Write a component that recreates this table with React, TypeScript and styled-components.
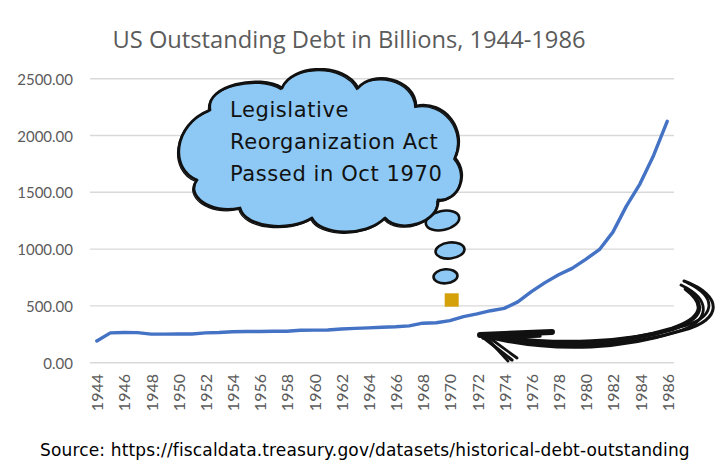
import React from "react";
import styled, { createGlobalStyle } from "styled-components";

const GlobalStyle = createGlobalStyle`
  html, body {
    margin: 0;
    padding: 0;
    background: #ffffff;
  }
`;

// outstanding debt, billions of dollars, 1944..1986
const debt = [
  191, 262, 266, 265, 252, 252, 253, 253, 262, 266, 273, 275, 275, 276, 277,
  285, 287, 288, 297, 302, 306, 312, 316, 324, 348, 352, 371, 405, 430, 458,
  478, 535, 625, 705, 775, 830, 910, 995, 1150, 1380, 1575, 1825, 2125,
];

const PLOT_LEFT = 90;
const PLOT_RIGHT = 674;
const ZERO_Y = 362.7;
const STEP_Y = 56.8; // px per 500
const slot = (PLOT_RIGHT - PLOT_LEFT) / debt.length;
const xOf = (i: number) => PLOT_LEFT + slot * (i + 0.5);
const yOf = (v: number) => ZERO_Y - (v / 500) * STEP_Y;

const ticks = [0, 500, 1000, 1500, 2000, 2500];

const Page = styled.div`
  position: relative;
  width: 722px;
  height: 472px;
  background: #ffffff;
  overflow: hidden;
  display: flex;
  flex-direction: column;
`;

const Title = styled.h1`
  margin: 0;
  padding: 26px 24px 8px 0;
  font-family: "Open Sans", Lato, sans-serif;
  font-weight: 400;
  font-size: 23.7px;
  line-height: 26px;
  color: #5b5b5b;
  text-align: center;
  white-space: nowrap;
`;

const Plot = styled.svg`
  display: block;
  flex: none;
  width: 722px;
  height: 360px;
`;

const AxisLabel = styled.text`
  font-family: Lato, "Open Sans", sans-serif;
  font-size: 15px;
  fill: #5b5b5b;
`;

const YearLabel = styled(AxisLabel)`
  font-size: 16px;
`;

const Source = styled.p`
  margin: 20px 0 0;
  padding-left: 40px;
  font-family: "Comic Sans MS", "DejaVu Sans", sans-serif;
  font-size: 17px;
  line-height: 20px;
  letter-spacing: 0.15px;
  color: #000000;
  white-space: nowrap;
`;

const Callout = styled.div`
  position: absolute;
  left: 176px;
  top: 68px;
  width: 290px;
  height: 166px;
`;

const CloudShape = styled.svg`
  position: absolute;
  inset: 0;
  width: 100%;
  height: 100%;
`;

const CalloutText = styled.div`
  position: relative;
  padding: 26px 0 0 54px;
  font-family: "Comic Sans MS", "DejaVu Sans", sans-serif;
  font-size: 21px;
  line-height: 32px;
  letter-spacing: 0.6px;
  color: #111111;
  white-space: nowrap;
`;

const cloudPath =
  "M 210 110 C 205 85, 260 74, 282 88 C 292 64, 345 62, 358 88 " +
  "C 372 70, 415 78, 416 106 C 445 100, 468 130, 455 158 " +
  "C 470 175, 458 202, 438 200 C 440 222, 400 235, 385 218 " +
  "C 365 238, 320 235, 312 218 C 290 232, 245 228, 240 208 " +
  "C 210 215, 185 195, 197 180 C 170 170, 172 125, 210 110 Z";

const arrowStrokes = [
  { d: "M 684 281 C 724 296, 722 320, 684 330 C 632 346, 560 352, 484 336", w: 3 },
  { d: "M 688 283 C 718 298, 716 318, 680 327 C 630 341, 560 347, 486 334", w: 2.8 },
  { d: "M 681 285 C 712 300, 711 322, 676 332 C 628 348, 560 354, 490 338", w: 2.8 },
  { d: "M 686 289 C 706 304, 704 318, 672 329 C 626 343, 560 350, 488 336", w: 4.5 },
  { d: "M 480 335 L 552 332", w: 6 },
  { d: "M 483 338 L 540 336", w: 3.5 },
  { d: "M 480 335 L 512 360", w: 3.2 },
  { d: "M 484 335 L 508 361", w: 2.8 },
  { d: "M 487 336 L 517 358", w: 2.8 },
];

const bubbles = [
  { cx: 442.5, cy: 220.5, rx: 17, ry: 9.5, rot: -12 },
  { cx: 450, cy: 250.5, rx: 14.5, ry: 8, rot: -6 },
  { cx: 445.5, cy: 276.3, rx: 12, ry: 7, rot: -4 },
];

const App: React.FC = () => {
  const linePoints = debt.map((v, i) => `${xOf(i).toFixed(1)},${yOf(v).toFixed(1)}`).join(" ");

  return (
    <Page>
      <GlobalStyle />
      <Title>US Outstanding Debt in Billions, 1944-1986</Title>

      <Plot viewBox="0 60 722 360">
        {ticks.map((t) => {
          const y = ZERO_Y - (t / 500) * STEP_Y;
          return (
            <g key={t}>
              <line x1={PLOT_LEFT} x2={PLOT_RIGHT} y1={y} y2={y} stroke="#d9d9d9" strokeWidth={1.4} />
              <AxisLabel x={73} y={y} textAnchor="end" dominantBaseline="central">
                {t.toFixed(2)}
              </AxisLabel>
            </g>
          );
        })}

        {debt.map((_, i) =>
          i % 2 === 0 ? (
            <YearLabel
              key={i}
              x={xOf(i)}
              y={374}
              textAnchor="end"
              dominantBaseline="central"
              transform={`rotate(-90 ${xOf(i)} 374)`}
            >
              {1944 + i}
            </YearLabel>
          ) : null
        )}

        <polyline
          points={linePoints}
          fill="none"
          stroke="#4472c4"
          strokeWidth={3.4}
          strokeLinejoin="round"
          strokeLinecap="round"
        />

        <rect x={444.7} y={293.3} width={14} height={13.4} fill="#d5a10a" />

        {bubbles.map((b, i) => (
          <ellipse
            key={i}
            cx={b.cx}
            cy={b.cy}
            rx={b.rx}
            ry={b.ry}
            transform={`rotate(${b.rot} ${b.cx} ${b.cy})`}
            fill="#8dc9f4"
            stroke="#111111"
            strokeWidth={2.6}
          />
        ))}

        <g fill="none" stroke="#111111" strokeLinecap="round" strokeLinejoin="round">
          {arrowStrokes.map((s, i) => (
            <path key={i} d={s.d} strokeWidth={s.w} />
          ))}
        </g>
      </Plot>

      <Source>Source: https://fiscaldata.treasury.gov/datasets/historical-debt-outstanding</Source>

      <Callout>
        <CloudShape viewBox="176 68 290 166">
          <path d={cloudPath} fill="#8dc9f4" stroke="#111111" strokeWidth={2.8} strokeLinejoin="round" />
          <path
            d={cloudPath}
            fill="none"
            stroke="#111111"
            strokeWidth={1.3}
            transform="translate(-1.2 1.4)"
          />
        </CloudShape>
        <CalloutText>
          Legislative
          <br />
          Reorganization Act
          <br />
          Passed in Oct 1970
        </CalloutText>
      </Callout>
    </Page>
  );
};

export default App;
